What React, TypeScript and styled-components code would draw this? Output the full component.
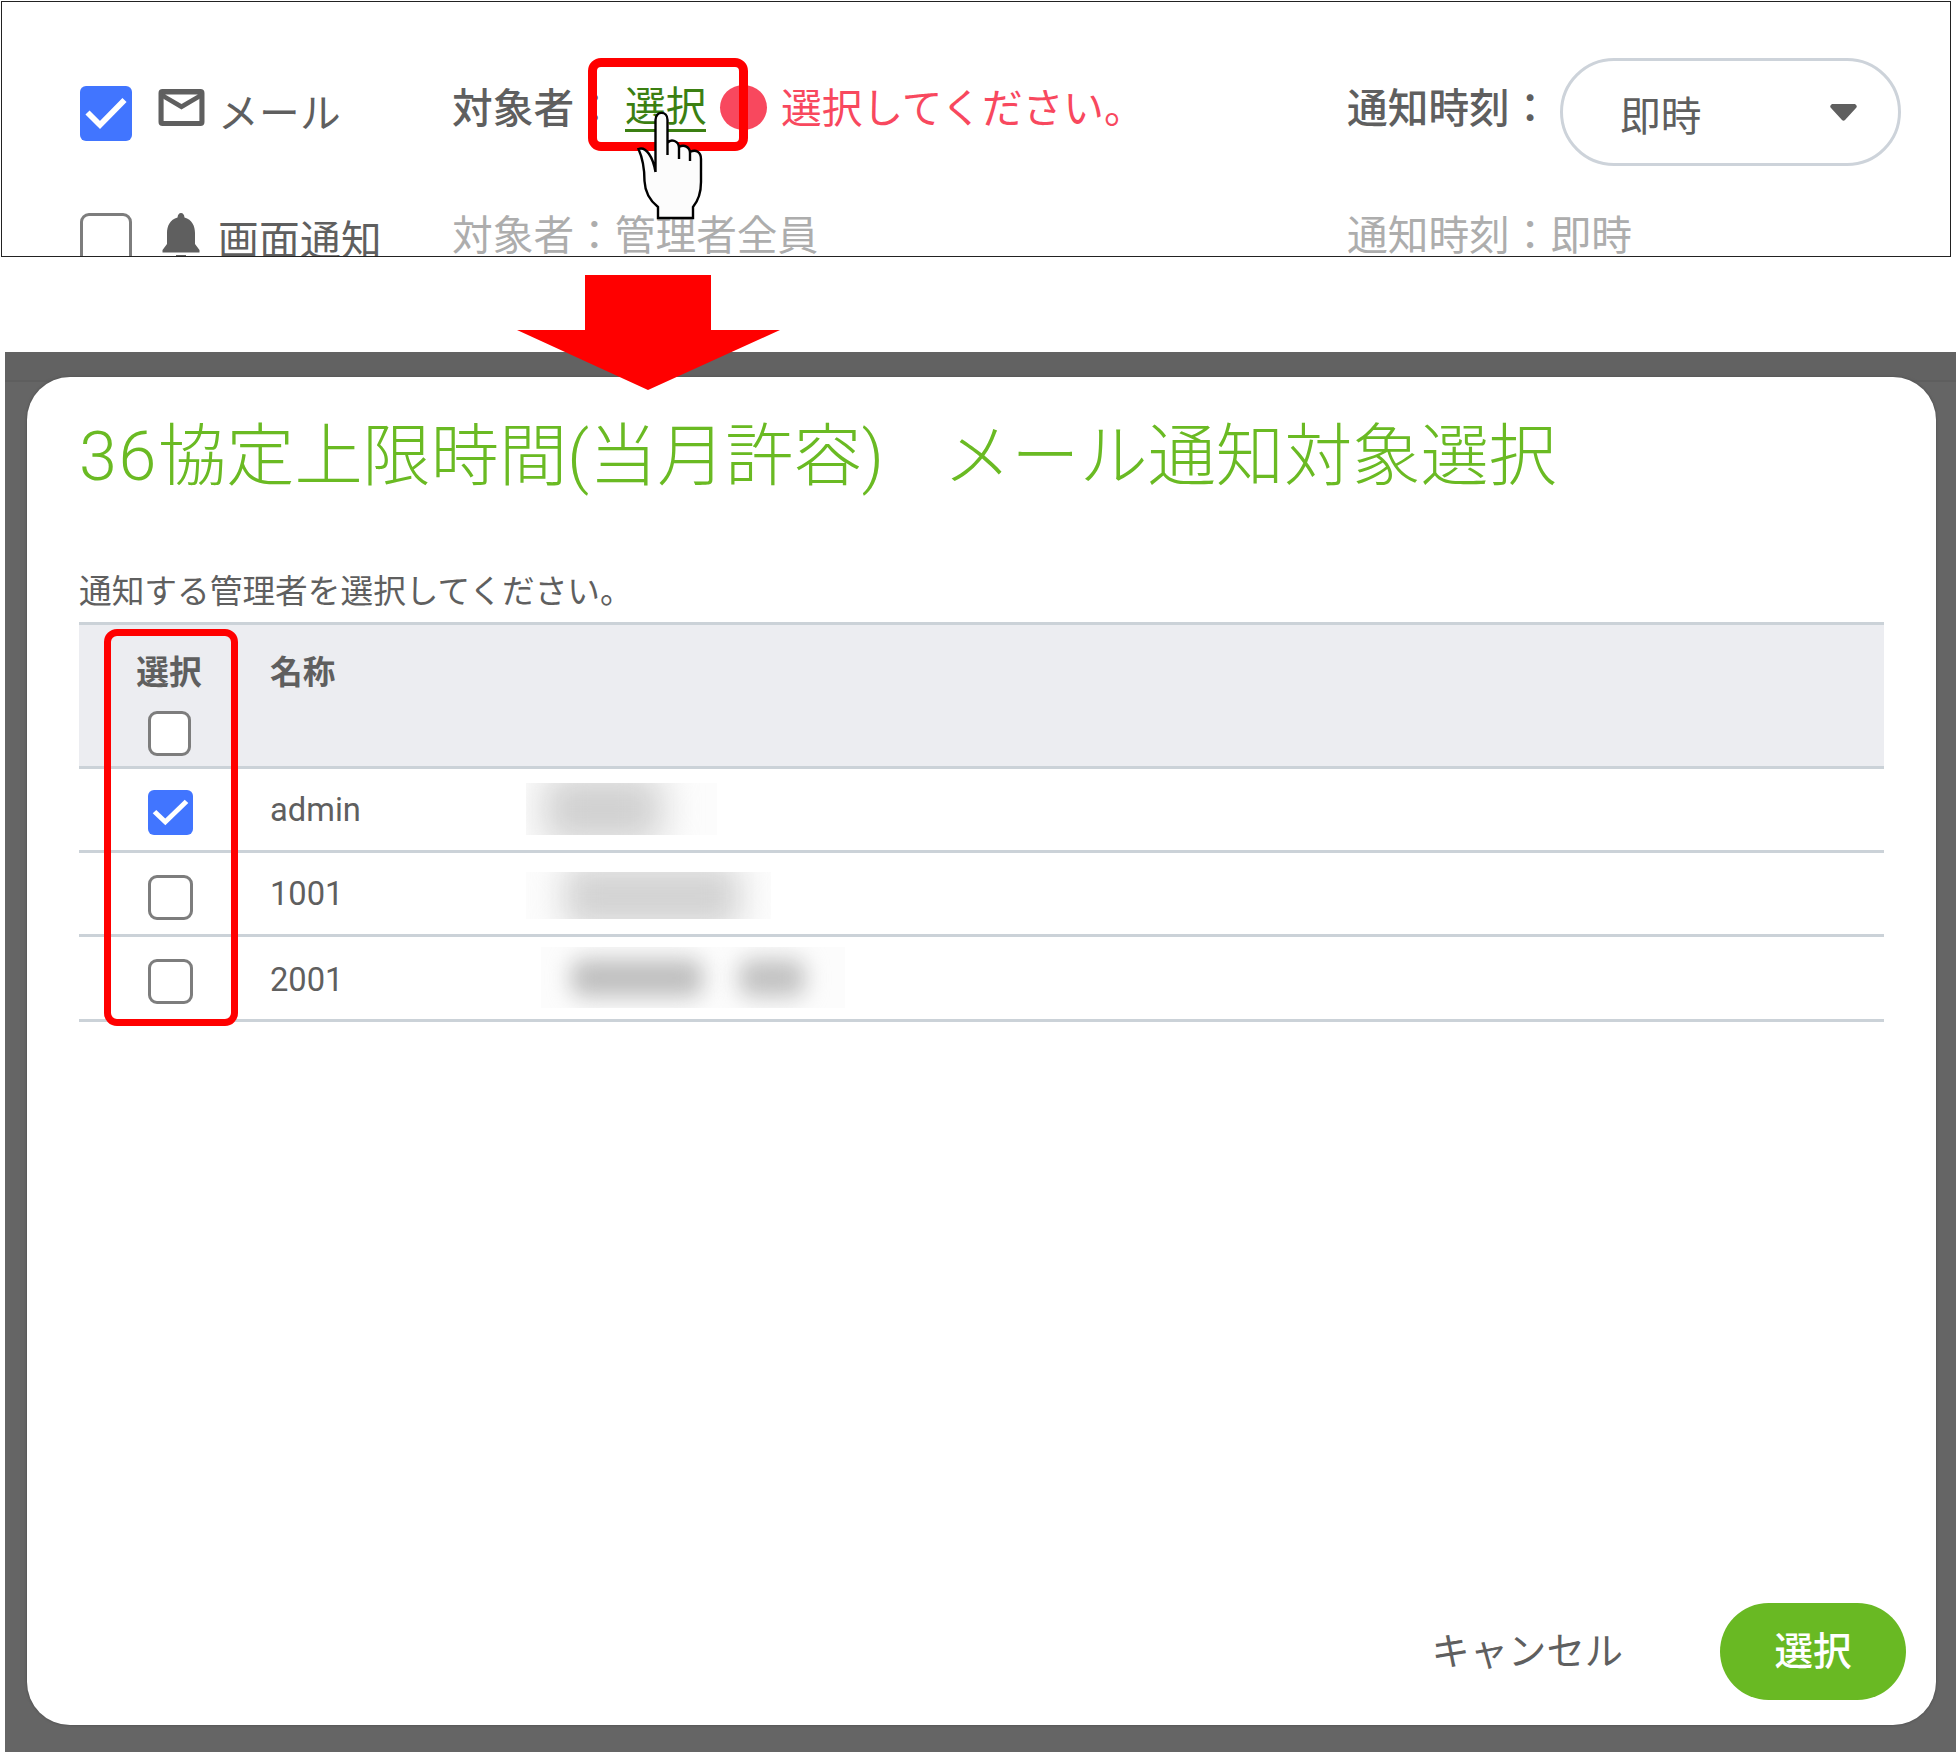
import React from "react";
import styled, { createGlobalStyle } from "styled-components";

const jp = `Roboto, "Noto Sans CJK JP", sans-serif`;

const GlobalStyle = createGlobalStyle`
  * { box-sizing: border-box; }
  body { margin: 0; background: #fff; color: #5f5f5f; font-family: ${jp}; }
`;

const Page = styled.main`
  position: relative;
  width: 1956px;
  height: 1752px;
  overflow: hidden;
  display: flex;
  flex-direction: column;
`;

/* Notification settings panel */

const SettingsPanel = styled.section`
  width: 1950px;
  height: 256px;
  margin: 1px 0 0 1px;
  padding: 48px 0 0 78px;
  border: 1px solid #222;
  overflow: hidden;
`;

const SettingsRow = styled.div`
  display: grid;
  grid-template-columns: 78px 60px 234px 895px 1fr;
  align-items: center;
  height: 127px;
  font-size: 40.7px;
  line-height: 42px;
  white-space: nowrap;
`;

const IconCell = styled.div<{ $shift: number }>`
  display: flex;
  margin-top: ${(p) => p.$shift}px;
`;

const ChannelName = styled.span`
  letter-spacing: 0.3px;
`;

const Field = styled.div<{ $muted?: boolean }>`
  display: flex;
  align-items: center;
  margin-top: -10px;
  color: ${(p) => (p.$muted ? "#adadad" : "#5f5f5f")};
`;

const FieldText = styled.span<{ $width: number }>`
  width: ${(p) => p.$width}px;
  font-weight: 500;
`;

const PickLink = styled.a`
  width: 81px;
  height: 46px;
  margin: 1px 14px 0 10px;
  line-height: 42px;
  color: #3b7f12;
  border-bottom: 3px solid #3b7f12;
`;

const ErrorDot = styled.i`
  width: 47px;
  height: 45px;
  margin: -2px 14px 0 0;
  border-radius: 50%;
  background: #f8485e;
`;

const ErrorText = styled.span`
  color: #f8485e;
`;

const TimeSelect = styled.div`
  display: flex;
  align-items: center;
  justify-content: space-between;
  width: 341px;
  height: 108px;
  margin-top: 7px;
  padding: 9px 41px 0 57px;
  border: 3px solid #cdd3da;
  border-radius: 54px;
`;

const Caret = styled.svg`
  width: 27px;
  height: 17px;
  margin-top: -9px;
`;

/* Checkbox */

const Box = styled.span<{ $w: number; $h: number; $checked?: boolean }>`
  display: flex;
  width: ${(p) => p.$w}px;
  height: ${(p) => p.$h}px;
  border: ${(p) => (p.$checked ? "none" : "3px solid #7d7d7d")};
  border-radius: ${(p) => (p.$checked ? 6 : 9)}px;
  background: ${(p) => (p.$checked ? "#4175ff" : "#fff")};
`;

function Checkbox({ w, h, checked }: { w: number; h: number; checked?: boolean }) {
  return (
    <Box $w={w} $h={h} $checked={checked}>
      {checked && (
        <svg viewBox="0 0 52 55" width="100%" height="100%" preserveAspectRatio="none">
          <path d="M7.5 26.500L20 39L44.500 14" fill="none" stroke="#fff" strokeWidth="5.800" />
        </svg>
      )}
    </Box>
  );
}

/* Dialog */

const Backdrop = styled.div`
  flex: 1;
  margin: 95px 0 0 5px;
  padding: 25px 20px 27px 22px;
  background: linear-gradient(#626262 0 28px, #5e5e5e 28px 30px, #656565 30px);
  display: flex;
`;

const Dialog = styled.section`
  flex: 1;
  display: flex;
  flex-direction: column;
  padding: 40px 29px 25px 52px;
  border-radius: 43px;
  background: #fff;
  box-shadow: 0 0 2px 1px #585858;
`;

const Title = styled.h1`
  margin: 0;
  height: 80px;
  line-height: 80px;
  font-size: 68.2px;
  font-weight: 300;
  color: #6aba23;
  white-space: pre;
`;

const TitleNumber = styled.span`
  letter-spacing: 1.7px;
`;

const TitleGap = styled.span`
  letter-spacing: -9px;
`;

const Lead = styled.p`
  margin: 71px 0 0;
  height: 54px;
  line-height: 48px;
  font-size: 32.7px;
`;

const Table = styled.div`
  width: 1805px;
  border-top: 3px solid #cbd2d8;
`;

const TableRow = styled.div<{ $head?: boolean }>`
  display: grid;
  grid-template-columns: 191px 256px 1fr;
  align-items: center;
  height: ${(p) => (p.$head ? 143.5 : 84.4)}px;
  border-bottom: 3px solid #cbd2d8;
  background: ${(p) => (p.$head ? "#ecedf1" : "#fff")};
  font-size: 32.7px;
  font-weight: ${(p) => (p.$head ? 700 : 400)};
`;

const SelectCell = styled.div`
  padding: 7px 0 0 69px;
`;

const HeadSelect = styled.div`
  display: flex;
  flex-direction: column;
  align-items: center;
  align-self: start;
  width: 180px;
  padding-top: 24px;
  line-height: 48px;
  gap: 14px;
`;

const HeadName = styled.div`
  align-self: start;
  padding-top: 24px;
  line-height: 48px;
`;

const Account = styled.div<{ $drop: number }>`
  line-height: 40px;
  padding-top: ${(p) => p.$drop}px;
`;

const Redacted = styled.div<{ $w: number; $h: number; $left: number; $top: number }>`
  display: flex;
  align-items: center;
  width: ${(p) => p.$w}px;
  height: ${(p) => p.$h}px;
  margin: ${(p) => p.$top}px 0 0 ${(p) => p.$left}px;
  overflow: hidden;
  background: #fcfcfc;
`;

const Smudge = styled.i<{ $w: number; $h: number; $gap: number; $tone: string; $blur: number }>`
  flex: none;
  width: ${(p) => p.$w}px;
  height: ${(p) => p.$h}px;
  margin-left: ${(p) => p.$gap}px;
  background: ${(p) => p.$tone};
  border-radius: 12px;
  filter: blur(${(p) => p.$blur}px);
`;

const Actions = styled.footer`
  display: flex;
  align-items: center;
  justify-content: flex-end;
  gap: 97px;
  margin-top: auto;
`;

const CancelButton = styled.button`
  border: 0;
  padding: 0;
  background: none;
  color: #5f5f5f;
  font: 400 38.3px/60px ${jp};
`;

const SubmitButton = styled.button`
  width: 186px;
  height: 97px;
  margin-right: 1px;
  border: 0;
  border-radius: 49px;
  background: #69b923;
  color: #fff;
  font: 500 38.6px/60px ${jp};
`;

/* Annotations drawn over the screens */

const Highlight = styled.div<{ $x: number; $y: number; $w: number; $h: number; $line: number }>`
  position: absolute;
  left: ${(p) => p.$x}px;
  top: ${(p) => p.$y}px;
  width: ${(p) => p.$w}px;
  height: ${(p) => p.$h}px;
  border: ${(p) => p.$line}px solid #f00;
  border-radius: 13px;
`;

const Overlay = styled.svg<{ $x: number; $y: number }>`
  position: absolute;
  left: ${(p) => p.$x}px;
  top: ${(p) => p.$y}px;
`;

type Blob = { w: number; h: number; gap: number; tone: string; blur: number };
type Manager = {
  id: string;
  checked?: boolean;
  drop: number;
  patch: { w: number; h: number; left: number; top: number };
  blobs: Blob[];
};

const managers: Manager[] = [
  {
    id: "admin", checked: true, drop: 1,
    patch: { w: 191, h: 52, left: 0, top: 0 },
    blobs: [{ w: 118, h: 68, gap: 18, tone: "#d0d0d0", blur: 18 }],
  },
  {
    id: "1001", drop: 1,
    patch: { w: 245, h: 47, left: 0, top: 4 },
    blobs: [{ w: 176, h: 64, gap: 38, tone: "#d3d3d3", blur: 16 }],
  },
  {
    id: "2001", drop: 5,
    patch: { w: 304, h: 61, left: 15, top: 0 },
    blobs: [
      { w: 132, h: 38, gap: 30, tone: "#bfbfbf", blur: 11 },
      { w: 66, h: 38, gap: 36, tone: "#c2c2c2", blur: 11 },
    ],
  },
];

export default function App() {
  return (
    <Page>
      <GlobalStyle />
      <SettingsPanel>
        <SettingsRow>
          <Checkbox w={52} h={55} checked />
          <IconCell $shift={-12}>
            <svg width="47" height="37" viewBox="0 0 46 37" preserveAspectRatio="none">
              <rect x="3" y="2.500" width="40" height="32" rx="1.500" fill="none" stroke="#5f5f5f" strokeWidth="5" />
              <path d="M4 3h38v6L23 20.500 4 9z" fill="#5f5f5f" />
              <path d="M7 5.500h32L23 15z" fill="#fff" />
            </svg>
          </IconCell>
          <ChannelName>メール</ChannelName>
          <Field>
            <FieldText $width={163}>対象者：</FieldText>
            <PickLink>選択</PickLink>
            <ErrorDot />
            <ErrorText>選択してください。</ErrorText>
          </Field>
          <Field>
            <FieldText $width={213}>通知時刻：</FieldText>
            <TimeSelect>
              即時
              <Caret viewBox="0 0 27 17">
                <path d="M2 0h23q3 2 1 4L15 16q-1.500 1.500-3 0L1 4Q-1 2 2 0z" fill="#5f5f5f" />
              </Caret>
            </TimeSelect>
          </Field>
        </SettingsRow>
        <SettingsRow>
          <Checkbox w={52} h={55} />
          <IconCell $shift={-8}>
            <svg width="46" height="48" viewBox="0 0 46 48">
              <path
                d="M23 0q3 0 3.500 4.500C34 6.500 37 13 37 20v11l4.500 6v2.500h-37V37L9 31V20C9 13 12 6.500 19.500 4.500Q20 0 23 0zM18 42h10q0 5-5 5t-5-5z"
                fill="#5f5f5f"
              />
            </svg>
          </IconCell>
          <ChannelName>画面通知</ChannelName>
          <Field $muted>対象者：管理者全員</Field>
          <Field $muted>通知時刻：即時</Field>
        </SettingsRow>
      </SettingsPanel>

      <Backdrop>
        <Dialog>
          <Title>
            <TitleNumber>36</TitleNumber>協定上限時間(当月許容)<TitleGap>　</TitleGap>メール通知対象選択
          </Title>
          <Lead>通知する管理者を選択してください。</Lead>
          <Table>
            <TableRow $head>
              <HeadSelect>
                選択
                <Checkbox w={43} h={45} />
              </HeadSelect>
              <HeadName>名称</HeadName>
            </TableRow>
            {managers.map((m) => (
              <TableRow key={m.id}>
                <SelectCell>
                  <Checkbox w={45} h={45} checked={m.checked} />
                </SelectCell>
                <Account $drop={m.drop}>{m.id}</Account>
                <Redacted $w={m.patch.w} $h={m.patch.h} $left={m.patch.left} $top={m.patch.top}>
                  {m.blobs.map((b, i) => (
                    <Smudge key={i} $w={b.w} $h={b.h} $gap={b.gap} $tone={b.tone} $blur={b.blur} />
                  ))}
                </Redacted>
              </TableRow>
            ))}
          </Table>
          <Actions>
            <CancelButton>キャンセル</CancelButton>
            <SubmitButton>選択</SubmitButton>
          </Actions>
        </Dialog>
      </Backdrop>

      <Highlight $x={588} $y={58} $w={160} $h={93} $line={9} />
      <Highlight $x={104} $y={629} $w={134} $h={397} $line={7} />
      <Overlay $x={517} $y={275} width="263" height="115" viewBox="0 0 263 115">
        <path d="M68 0h126v55h69L131 115 0 55h68z" fill="#f00" />
      </Overlay>
      <Overlay $x={636} $y={111} width="68" height="109" viewBox="0 0 68 109">
        <path
          d="M19.500 61V9C19.500-.5 31.500-.5 31.500 9V44 32C35 27 43 30 43 37V48 36C48 33 54 36 54 42V50 41C60 38 65 41 65 48V71C65 82 62 90 57 96V107H22V96C13 89 9 80 8.500 70C8.500 58 7 48 2.500 38C10 35 17 46 19.500 61Z"
          fill="#fcfcfc"
        />
        <path
          d="M19.500 61V9C19.500-.5 31.500-.5 31.500 9V44M31.500 32C35 27 43 30 43 37V48M43 36C48 33 54 36 54 42V50M54 41C60 38 65 41 65 48V71C65 82 62 90 57 96V107H22V96C13 89 9 80 8.500 70C8.500 58 7 48 2.500 38C10 35 17 46 19.500 61"
          fill="none"
          stroke="#000"
          strokeWidth="2.400"
        />
      </Overlay>
    </Page>
  );
}
